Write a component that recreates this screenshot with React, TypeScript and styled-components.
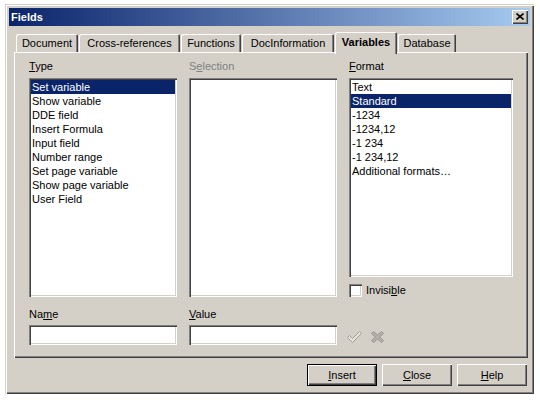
import styled, { createGlobalStyle } from 'styled-components';

const face = '#d4d0c8';
const shadow = '#808080';
const darkShadow = '#404040';
const selection = '#0a246a';

const GlobalStyle = createGlobalStyle`
  html, body {
    margin: 0;
    padding: 0;
    background: #fff;
  }
  body {
    font-family: 'Liberation Sans', Arial, sans-serif;
    font-size: 11px;
    color: #000;
  }
  u {
    text-underline-offset: 1px;
  }
`;

const typeItems = [
  'Set variable',
  'Show variable',
  'DDE field',
  'Insert Formula',
  'Input field',
  'Number range',
  'Set page variable',
  'Show page variable',
  'User Field',
];

const formatItems = [
  'Text',
  'Standard',
  '-1234',
  '-1234,12',
  '-1 234',
  '-1 234,12',
  'Additional formats…',
];

const tabs = [
  { label: 'Document', width: 62 },
  { label: 'Cross-references', width: 101 },
  { label: 'Functions', width: 60 },
  { label: 'DocInformation', width: 92 },
  { label: 'Variables', width: 62, active: true },
  { label: 'Database', width: 58 },
];

export default function App() {
  return (
    <>
      <GlobalStyle />
      <Window>
        <TitleBar>
          <span>Fields</span>
          <CaptionButton>
            <svg width='8' height='7' viewBox='0 0 8 7'>
              <path d='M0.5 0.5 L7.5 6.5 M7.5 0.5 L0.5 6.5' stroke='#000' strokeWidth='1.6' />
            </svg>
          </CaptionButton>
        </TitleBar>

        <TabStrip>
          {tabs.map((t) => (
            <Tab key={t.label} $w={t.width} $active={t.active}>
              {t.label}
            </Tab>
          ))}
        </TabStrip>

        <Panel>
          <Label>
            <u>T</u>ype
          </Label>
          <Label $disabled>
            S<u>e</u>lection
          </Label>
          <Label>
            <u>F</u>ormat
          </Label>

          <ListBox>
            {typeItems.map((item, i) => (
              <ListItem key={item} $selected={i === 0}>
                {item}
              </ListItem>
            ))}
          </ListBox>
          <ListBox />
          <FormatColumn>
            <ListBox $h={199}>
              {formatItems.map((item, i) => (
                <ListItem key={item} $selected={i === 1}>
                  {item}
                </ListItem>
              ))}
            </ListBox>
            <CheckRow>
              <CheckBox />
              <span>
                Invisi<u>b</u>le
              </span>
            </CheckRow>
          </FormatColumn>

          <Field>
            <Label>
              Na<u>m</u>e
            </Label>
            <TextInput />
          </Field>
          <Field>
            <Label>
              <u>V</u>alue
            </Label>
            <TextInput />
          </Field>
          <IconRow>
            <svg width='15' height='12' viewBox='0 0 15 12'>
              <path
                d='M0.5 6.5 L2.5 4.5 L5.5 7.5 L12.5 0.5 L14.5 2.5 L5.5 11.5 Z'
                fill='#e4e1db'
                stroke='#a19e98'
                strokeWidth='1'
              />
            </svg>
            <svg width='13' height='12' viewBox='0 0 13 12'>
              <path
                d='M0.5 2.5 L2.5 0.5 L6.5 4 L10.5 0.5 L12.5 2.5 L8.5 6 L12.5 9.5 L10.5 11.5 L6.5 8 L2.5 11.5 L0.5 9.5 L4.5 6 Z'
                fill='#b5b1aa'
                stroke='#979390'
                strokeWidth='1'
              />
            </svg>
          </IconRow>
        </Panel>

        <ButtonRow>
          <Button $default>
            <u>I</u>nsert
          </Button>
          <Button>
            <u>C</u>lose
          </Button>
          <Button>
            <u>H</u>elp
          </Button>
        </ButtonRow>
      </Window>
    </>
  );
}

const Window = styled('div')`
  box-sizing: border-box;
  width: 529px;
  height: 390px;
  margin: 4px 0 0 5px;
  padding: 4px;
  background: ${face};
  box-shadow: inset 1px 1px ${face}, inset 2px 2px #fff,
    inset -1px -1px ${darkShadow}, inset -2px -2px ${shadow};
  display: flex;
  flex-direction: column;
`;

const TitleBar = styled('div')`
  height: 18px;
  display: flex;
  align-items: center;
  justify-content: space-between;
  padding: 0 2px 0 2px;
  background: linear-gradient(to right, #0a246a, #a6caf0);
  color: #fff;
  font-weight: bold;
`;

const CaptionButton = styled('div')`
  box-sizing: border-box;
  width: 16px;
  height: 14px;
  display: flex;
  align-items: center;
  justify-content: center;
  padding: 0 1px 1px 0;
  background: ${face};
  box-shadow: inset 1px 1px #fff, inset -1px -1px ${darkShadow},
    inset -2px -2px ${shadow};
`;

const TabStrip = styled('div')`
  height: 20px;
  margin-top: 6px;
  padding-left: 7px;
  display: flex;
  align-items: flex-end;
  gap: 1px;
`;

const Tab = styled('div')<{ $w: number; $active?: boolean }>`
  box-sizing: border-box;
  width: ${(p) => p.$w}px;
  height: ${(p) => (p.$active ? 22 : 18)}px;
  margin-bottom: ${(p) => (p.$active ? -2 : 0)}px;
  padding-bottom: ${(p) => (p.$active ? 3 : 0)}px;
  display: flex;
  align-items: center;
  justify-content: center;
  white-space: nowrap;
  font-weight: ${(p) => (p.$active ? 'bold' : 'normal')};
  background: ${face};
  border-radius: 2px 2px 0 0;
  box-shadow: inset 1px 1px #fff, inset -1px 0 ${darkShadow},
    inset -2px 0 ${shadow};
  ${(p) => p.$active && 'position: relative; z-index: 1;'}
`;

const Panel = styled('div')`
  box-sizing: border-box;
  width: 514px;
  height: 306px;
  margin-left: 5px;
  padding: 8px 0 0 15px;
  background: ${face};
  box-shadow: inset 1px 1px #fff, inset -1px -1px ${darkShadow},
    inset -2px -2px ${shadow};
  display: grid;
  grid-template-columns: 148px 148px 164px;
  grid-template-rows: 13px 219px auto;
  column-gap: 12px;
  row-gap: 5px;
  align-content: start;
`;

const Label = styled('div')<{ $disabled?: boolean }>`
  height: 13px;
  line-height: 13px;
  color: ${(p) => (p.$disabled ? shadow : '#000')};
`;

const sunken = `
  box-shadow: inset 1px 1px ${shadow}, inset 2px 2px ${darkShadow},
    inset -1px -1px #fff, inset -2px -2px ${face};
`;

const ListBox = styled('div')<{ $h?: number }>`
  box-sizing: border-box;
  height: ${(p) => p.$h ?? 219}px;
  padding: 2px;
  background: #fff;
  overflow: hidden;
  ${sunken}
`;

const ListItem = styled('div')<{ $selected?: boolean }>`
  height: 14px;
  line-height: 14px;
  padding-left: 1px;
  white-space: nowrap;
  background: ${(p) => (p.$selected ? selection : 'transparent')};
  color: ${(p) => (p.$selected ? '#fff' : '#000')};
`;

const FormatColumn = styled('div')`
  display: flex;
  flex-direction: column;
  gap: 7px;
`;

const CheckRow = styled('label')`
  display: flex;
  align-items: center;
  gap: 4px;
  height: 13px;
  line-height: 13px;
`;

const CheckBox = styled('span')`
  box-sizing: border-box;
  width: 13px;
  height: 13px;
  background: #fff;
  ${sunken}
`;

const Field = styled('div')`
  margin-top: 6px;
  display: flex;
  flex-direction: column;
  gap: 4px;
`;

const TextInput = styled('div')`
  box-sizing: border-box;
  height: 20px;
  background: #fff;
  ${sunken}
`;

const IconRow = styled('div')`
  margin-top: 6px;
  padding: 23px 0 0 0;
  display: flex;
  align-items: flex-start;
  gap: 9px;
  margin-left: -2px;
`;

const ButtonRow = styled('div')`
  margin-top: 6px;
  padding-right: 3px;
  display: flex;
  justify-content: flex-end;
  gap: 5px;
`;

const Button = styled('div')<{ $default?: boolean }>`
  box-sizing: border-box;
  width: 70px;
  height: 22px;
  display: flex;
  align-items: center;
  justify-content: center;
  background: ${face};
  border: ${(p) => (p.$default ? '1px solid #000' : 'none')};
  box-shadow: inset 1px 1px #fff, inset -1px -1px ${darkShadow},
    inset -2px -2px ${shadow};
`;
